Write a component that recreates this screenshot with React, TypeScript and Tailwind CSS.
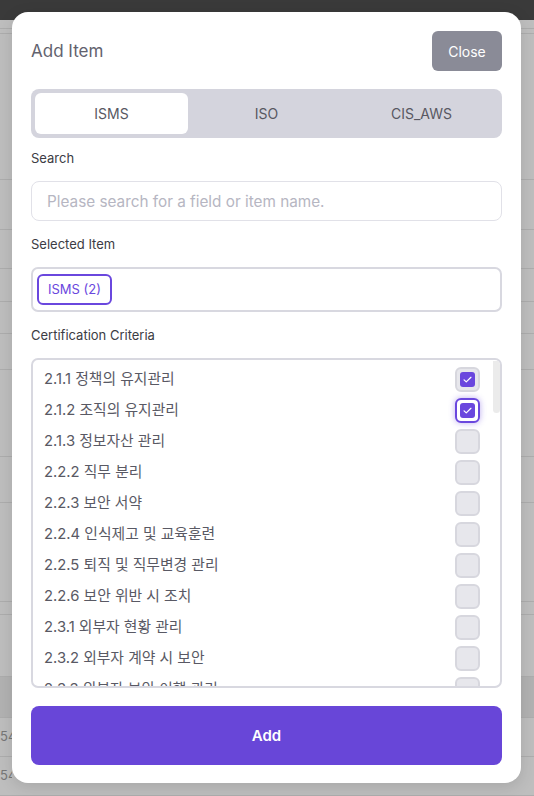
import { useState } from "react";

const TABS = ["ISMS", "ISO", "CIS_AWS"];

const CRITERIA = [
  "2.1.1 정책의 유지관리",
  "2.1.2 조직의 유지관리",
  "2.1.3 정보자산 관리",
  "2.2.2 직무 분리",
  "2.2.3 보안 서약",
  "2.2.4 인식제고 및 교육훈련",
  "2.2.5 퇴직 및 직무변경 관리",
  "2.2.6 보안 위반 시 조치",
  "2.3.1 외부자 현황 관리",
  "2.3.2 외부자 계약 시 보안",
  "2.3.3 외부자 보안 이행 관리",
];

// faux page rows behind the dimmed overlay
const BG_ROWS: { h: number; dark?: boolean; text?: string }[] = [
  { h: 9 },
  { h: 5 },
  { h: 146 },
  { h: 50 },
  { h: 39 },
  { h: 33 },
  { h: 32 },
  { h: 36 },
  { h: 87 },
  { h: 46 },
  { h: 99 },
  { h: 13 },
  { h: 62 },
  { h: 41, dark: true },
  { h: 39, text: "54" },
  { h: 39, text: "542" },
];

function Check() {
  return (
    <svg viewBox="0 0 16 16" className="w-[11px] h-[11px]" fill="none" stroke="white" strokeWidth={1.8} strokeLinecap="round" strokeLinejoin="round">
      <path d="M3 8.5l3.2 3L13 4.8" />
    </svg>
  );
}

function Checkbox({ checked, focused }: { checked: boolean; focused?: boolean }) {
  return (
    <div
      className={
        focused
          ? "w-[25px] h-[25px] rounded-[6px] border-2 border-[#6a47de] bg-white flex items-center justify-center shadow-[0_0_6px_rgba(106,71,222,0.45)]"
          : "w-[25px] h-[25px] rounded-[6px] border-2 border-[#d7d7de] bg-[#e7e7ec] flex items-center justify-center"
      }
    >
      {checked && (
        <div className="w-[15px] h-[15px] rounded-[3px] bg-[#6a47de] flex items-center justify-center">
          <Check />
        </div>
      )}
    </div>
  );
}

export default function App() {
  const [tab, setTab] = useState("ISMS");
  const [checked, setChecked] = useState<string[]>([CRITERIA[0], CRITERIA[1]]);

  const toggle = (c: string) =>
    setChecked(prev => (prev.includes(c) ? prev.filter(x => x !== c) : [...prev, c]));

  return (
    <div className="relative w-[534px] h-[796px] overflow-hidden bg-[#bebebe] font-['Inter','Noto_Sans_CJK_KR',sans-serif]">
      {/* background page */}
      <div className="h-[20px] bg-[#3a3a3a]" />
      <div className="flex flex-col">
        {BG_ROWS.map((r, i) => (
          <div
            key={i}
            style={{ height: r.h }}
            className={`border-b border-[#adadad] flex items-center text-[13px] text-[#777] ${r.dark ? "bg-[#b2b2b2]" : ""}`}
          >
            {r.text && <span className="w-[12px] overflow-hidden whitespace-nowrap">{r.text}</span>}
          </div>
        ))}
      </div>

      {/* modal */}
      <div className="absolute left-[12px] top-[12px] w-[509px] h-[771px] bg-white rounded-[16px] shadow-[0_4px_16px_rgba(0,0,0,0.12)] px-[19px] pt-[19px] pb-[18px] flex flex-col">
        <div className="flex items-center justify-between h-[40px]">
          <h2 className="text-[17px] text-[#62626e] pt-[1px]">Add Item</h2>
          <button className="w-[70px] h-[40px] rounded-[6px] bg-[#8a8b97] text-white text-[14px]">Close</button>
        </div>

        <div className="mt-[18px] h-[49px] bg-[#d4d4dd] rounded-[8px] p-[4px] flex gap-[2px]">
          {TABS.map(t => (
            <button
              key={t}
              onClick={() => setTab(t)}
              className={`flex-1 rounded-[6px] text-[14px] text-[#585862] ${tab === t ? "bg-white" : ""}`}
            >
              {t}
            </button>
          ))}
        </div>

        <label className="mt-[12px] text-[13px] leading-[16px] text-[#3c3c44]">Search</label>
        <input
          className="mt-[15px] h-[40px] rounded-[8px] border border-[#e1e1e8] px-[15px] text-[15.3px] outline-none placeholder:text-[#b6b6c2]"
          placeholder="Please search for a field or item name."
        />

        <label className="mt-[15px] text-[13px] leading-[16px] text-[#3c3c44]">Selected Item</label>
        <div className="mt-[15px] h-[45px] rounded-[7px] border-2 border-[#d8d8e0] flex items-center px-[4px]">
          <span className="h-[31px] px-[9px] flex items-center rounded-[6px] border-2 border-[#6a47de] text-[13px] text-[#6a47de]">
            ISMS ({checked.length})
          </span>
        </div>

        <label className="mt-[15px] text-[13px] leading-[16px] text-[#3c3c44]">Certification Criteria</label>
        <div className="relative mt-[15px] h-[330px] rounded-[7px] border-2 border-[#d8d8e0] overflow-hidden">
          <div className="pt-[4px] pl-[11px] pr-[20px]">
            {CRITERIA.map((c, i) => (
              <div key={c} onClick={() => toggle(c)} className="h-[31px] flex items-center justify-between cursor-pointer">
                <span className="text-[14.8px] text-[#595964]">{c}</span>
                <Checkbox checked={checked.includes(c)} focused={i === 1} />
              </div>
            ))}
          </div>
          <div className="absolute right-0 top-[1px] w-[7px] h-[52px] rounded-b-[4px] bg-[#ebebeb]" />
        </div>

        <button className="mt-[18px] h-[59px] pt-[2px] rounded-[8px] bg-[#6846d8] text-white text-[15px] font-semibold">Add</button>
      </div>
    </div>
  );
}
